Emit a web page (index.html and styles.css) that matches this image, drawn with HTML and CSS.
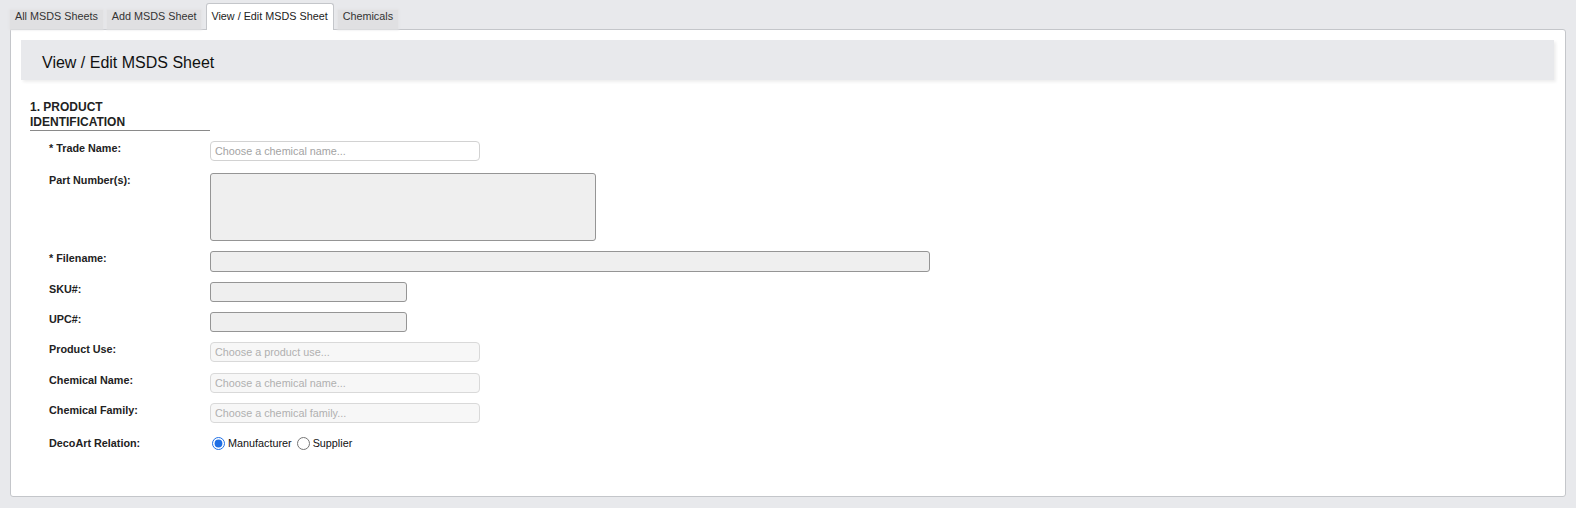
FILE: index.html
```html
<!DOCTYPE html>
<html lang="en">
<head>
<meta charset="utf-8">
<title>View / Edit MSDS Sheet</title>
<link rel="stylesheet" href="styles.css">
</head>
<body>
<div class="page">
  <ul class="tabs">
    <li class="tab">All MSDS Sheets</li>
    <li class="tab">Add MSDS Sheet</li>
    <li class="tab tab-active">View / Edit MSDS Sheet</li>
    <li class="tab">Chemicals</li>
  </ul>
  <div class="panel">
    <div class="panel-header">
      <h1 class="panel-title">View / Edit MSDS Sheet</h1>
    </div>
    <section class="section">
      <h2 class="section-title">1. PRODUCT IDENTIFICATION</h2>
      <div class="form">
        <div class="form-row row-trade">
          <label class="form-label">* Trade Name:</label>
          <input class="field field-chosen" type="text" placeholder="Choose a chemical name...">
        </div>
        <div class="form-row">
          <label class="form-label">Part Number(s):</label>
          <textarea class="field field-plain field-textarea"></textarea>
        </div>
        <div class="form-row">
          <label class="form-label">* Filename:</label>
          <input class="field field-plain field-wide" type="text">
        </div>
        <div class="form-row">
          <label class="form-label">SKU#:</label>
          <input class="field field-plain field-short" type="text">
        </div>
        <div class="form-row">
          <label class="form-label">UPC#:</label>
          <input class="field field-plain field-short" type="text">
        </div>
        <div class="form-row">
          <label class="form-label">Product Use:</label>
          <input class="field field-chosen field-muted" type="text" placeholder="Choose a product use...">
        </div>
        <div class="form-row row-chem-name">
          <label class="form-label">Chemical Name:</label>
          <input class="field field-chosen field-muted" type="text" placeholder="Choose a chemical name...">
        </div>
        <div class="form-row">
          <label class="form-label">Chemical Family:</label>
          <input class="field field-chosen field-muted" type="text" placeholder="Choose a chemical family...">
        </div>
        <div class="form-row row-radio">
          <label class="form-label">DecoArt Relation:</label>
          <div class="radio-group">
            <label class="radio-option"><input class="radio" type="radio" name="relation" checked>Manufacturer</label>
            <label class="radio-option"><input class="radio" type="radio" name="relation">Supplier</label>
          </div>
        </div>
      </div>
    </section>
  </div>
</div>
</body>
</html>
```

FILE: styles.css
```css
* {
  box-sizing: border-box;
}

html, body {
  margin: 0;
  padding: 0;
}

body {
  background: #e8e9ec;
  font-family: "Liberation Sans", Arial, Helvetica, sans-serif;
  color: #222;
}

.page {
  padding: 3px 10px 15px 10px;
}

/* Tabs */
.tabs {
  list-style: none;
  margin: 0 0 -1px 0;
  padding: 0;
  display: flex;
  align-items: flex-end;
  gap: 4px;
  position: relative;
  z-index: 1;
}

.tab {
  font-size: 10.8px;
  line-height: 12px;
  padding: 0 5px 7px 5px;
  height: 19px;
  margin-bottom: 1px;
  background: #e0e0e2;
  box-shadow: 0 0 2px 1px #e3e3e5;
  color: #333;
  white-space: nowrap;
}

.tab-active {
  background: #fff;
  box-shadow: none;
  border: 1px solid #c4c6ca;
  border-bottom: none;
  border-radius: 3px 3px 0 0;
  padding: 6px 5px 8px 4px;
  height: 27px;
  margin: 0 0 0 1px;
  color: #222;
}

/* Panel */
.panel {
  background: #fff;
  border: 1px solid #c4c6ca;
  border-radius: 0 3px 3px 3px;
  padding: 10px 11px 45px 10px;
}

.panel-header {
  background: #e8e9ec;
  height: 40px;
  padding: 5px 0 0 21px;
  box-shadow: 2px 2px 3px rgba(0, 0, 0, 0.07);
}

.panel-title {
  margin: 0;
  font-size: 16px;
  font-weight: normal;
  line-height: 35px;
  color: #111;
}

/* Section */
.section {
  margin: 20px 0 0 9px;
}

.section-title {
  margin: 0 0 10px 0;
  width: 180px;
  padding-right: 40px;
  font-size: 12px;
  line-height: 15px;
  font-weight: bold;
  color: #222;
  border-bottom: 1px solid #8a8a8a;
}

.form {
  display: flex;
  flex-direction: column;
  gap: 10px;
}

.form-row {
  display: flex;
  align-items: flex-start;
}

.row-trade {
  margin-bottom: 2px;
}

.row-chem-name {
  margin-top: 1px;
}

.row-radio {
  margin-top: 3px;
}

.form-label {
  width: 180px;
  flex: none;
  padding-left: 19px;
  font-size: 10.8px;
  line-height: 15px;
  font-weight: bold;
  color: #222;
}

.field {
  display: block;
  margin: 0;
  font-family: "Liberation Sans", Arial, Helvetica, sans-serif;
  font-size: 10.8px;
  color: #333;
  outline: none;
}

.field-chosen {
  width: 270px;
  height: 20px;
  padding: 0 4px;
  background: #fff;
  border: 1px solid #d2d2d2;
  border-radius: 4px;
}

.field-chosen::placeholder {
  color: #a3a3a3;
  opacity: 1;
}

.field-muted {
  background: #f7f7f7;
  border-color: #d9d9d9;
}

.field-muted::placeholder {
  color: #b0b0b0;
}

.field-plain {
  background: #efefef;
  border: 1px solid #959595;
  border-radius: 3px;
  padding: 0 4px;
}

.field-textarea {
  width: 386px;
  height: 68px;
  resize: none;
}

.field-wide {
  width: 720px;
  height: 21px;
}

.field-short {
  width: 197px;
  height: 20px;
}

/* Radios */
.radio-group {
  display: flex;
  align-items: center;
  gap: 3px;
  height: 15px;
  font-size: 10.8px;
  color: #111;
}

.radio-option {
  display: flex;
  align-items: center;
  line-height: 15px;
}

.radio {
  width: 13px;
  height: 13px;
  margin: 0 3px 0 2px;
  accent-color: #1f6fe5;
}
```
